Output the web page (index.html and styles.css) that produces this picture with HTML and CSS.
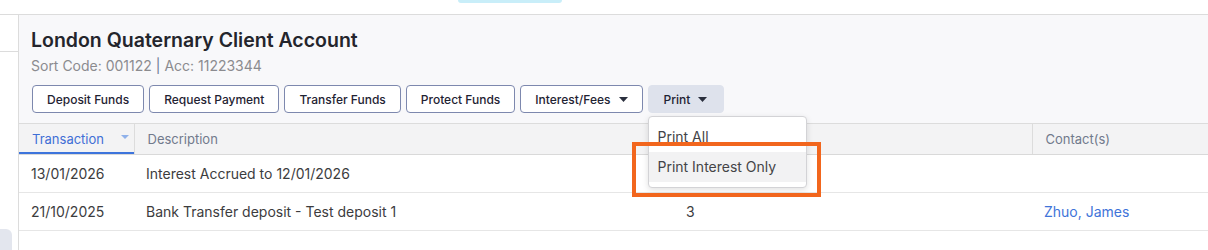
FILE: index.html
```html
<!DOCTYPE html>
<html lang="en">
<head>
<meta charset="utf-8">
<title>London Quaternary Client Account</title>
<link rel="stylesheet" href="styles.css">
</head>
<body>
<div class="topbar"><div class="pill"></div></div>
<div class="layout">
  <aside class="sidebar">
    <div class="side-top"></div>
    <div class="side-chip"></div>
  </aside>
  <main class="main">
    <section class="account-head">
      <h1 class="title">London Quaternary Client Account</h1>
      <p class="meta">Sort Code: 001122 <span class="sep">|</span> Acc: 11223344</p>
      <div class="actions">
        <button class="btn">Deposit Funds</button>
        <button class="btn">Request Payment</button>
        <button class="btn">Transfer Funds</button>
        <button class="btn">Protect Funds</button>
        <button class="btn">Interest/Fees <svg class="caret" width="9" height="5" viewBox="0 0 9 5"><path d="M0 0h9L4.5 5z" fill="currentColor"/></svg></button>
        <div class="print-wrap">
          <button class="btn btn-print">Print <svg class="caret" width="9" height="5" viewBox="0 0 9 5"><path d="M0 0h9L4.5 5z" fill="currentColor"/></svg></button>
          <div class="menu">
            <div class="menu-item">Print All</div>
            <div class="menu-item active">Print Interest Only</div>
            <div class="callout"></div>
          </div>
        </div>
      </div>
    </section>
    <table class="grid">
      <colgroup>
        <col class="c-tx"><col class="c-desc"><col class="c-amt"><col class="c-contact">
      </colgroup>
      <thead>
        <tr>
          <th class="sorted"><span>Transaction</span><svg class="sort" width="8" height="4" viewBox="0 0 8 4"><path d="M0 0h8L4 4z" fill="currentColor"/></svg></th>
          <th>Description</th>
          <th></th>
          <th class="last">Contact(s)</th>
        </tr>
      </thead>
      <tbody>
        <tr>
          <td>13/01/2026</td>
          <td>Interest Accrued to 12/01/2026</td>
          <td></td>
          <td></td>
        </tr>
        <tr>
          <td>21/10/2025</td>
          <td>Bank Transfer deposit - Test deposit 1</td>
          <td>3</td>
          <td><a class="link" href="#">Zhuo, James</a></td>
        </tr>
      </tbody>
    </table>
  </main>
</div>
</body>
</html>
```
FILE: styles.css
```css
* { box-sizing: border-box; }
html, body { margin: 0; padding: 0; }
body {
  font-family: Inter, "Noto Sans", sans-serif;
  background: #ffffff;
  color: #3d3d3d;
  overflow: hidden;
  height: 250px;
}
.topbar {
  height: 15px;
  border-bottom: 1px solid #dcdcdc;
  display: flex;
}
.pill {
  margin-left: 458px;
  width: 104px;
  height: 3px;
  background: #c9eef9;
  border-radius: 0 0 6px 6px;
}
.layout {
  display: flex;
  height: 235px;
}
.sidebar {
  width: 19px;
  flex: 0 0 19px;
  border-right: 1px solid #dcdcdc;
  display: flex;
  flex-direction: column;
}
.side-top {
  height: 37px;
  border-bottom: 1px solid #dcdcdc;
}
.side-chip {
  margin-top: auto;
  width: 12px;
  height: 21px;
  background: #e3e6ee;
  border-radius: 0 6px 0 0;
}
.main {
  flex: 1;
  min-width: 0;
}
.account-head {
  background: #f8f8fa;
  border-bottom: 1px solid #dcdcdc;
  padding: 13px 12px 10px 12px;
}
.title {
  margin: 0;
  font-size: 19.5px;
  line-height: 24px;
  font-weight: 600;
  color: #24252c;
}
.meta {
  margin: 4px 0 0;
  font-size: 14px;
  line-height: 19px;
  color: #8b8b8f;
}
.sep { color: #6d7896; }
.actions {
  margin-top: 10px;
  display: flex;
  gap: 5px;
  padding-left: 1px;
}
.btn {
  height: 28px;
  padding: 0 14px;
  border: 1px solid #7d88ae;
  border-radius: 4px;
  background: #ffffff;
  font-family: Inter, "Noto Sans", sans-serif;
  font-size: 12px;
  font-weight: 500;
  color: #1f2333;
  display: inline-flex;
  align-items: center;
  gap: 8px;
}
.caret { color: #2a2f3d; }
.print-wrap { position: relative; }
.btn-print {
  background: #dee2ec;
  border-color: #dee2ec;
  padding: 0 16px 0 15px;
}
.menu {
  position: absolute;
  top: 31px;
  left: 0;
  width: 159px;
  background: #ffffff;
  border: 1px solid #d3d3d6;
  border-radius: 4px;
  box-shadow: 0 2px 6px rgba(0,0,0,0.12);
  padding: 5px 0 5px;
  z-index: 10;
}
.menu-item {
  height: 30px;
  line-height: 30px;
  padding-left: 9px;
  font-size: 14px;
  color: #444447;
}
.menu-item.active { background: #f2f2f3; }
.callout {
  position: absolute;
  left: -17px;
  top: 25px;
  width: 189px;
  height: 55px;
  border: 4px solid #f2661d;
  pointer-events: none;
}
.grid {
  width: 100%;
  border-collapse: collapse;
  table-layout: fixed;
  font-size: 14px;
}
.c-tx { width: 115px; }
.c-desc { width: 540px; }
.c-amt { width: 358px; }
.c-contact { width: auto; }
.grid th {
  height: 30px;
  background: #f3f3f4;
  border-bottom: 1px solid #d9d9d9;
  border-right: 1px solid #dcdcdc;
  text-align: left;
  font-weight: 400;
  font-size: 13px;
  color: #717a8c;
  padding: 0 12px 0 13px;
}
.grid th.last { border-right: none; }
.grid th.sorted {
  color: #3f6fd6;
  box-shadow: inset 0 -2px 0 #3d74dc;
  padding-right: 5px;
}
.grid th.sorted span { vertical-align: middle; }
.sort {
  float: right;
  margin-top: 5px;
  color: #8fb1ea;
}
.grid td {
  height: 38px;
  border-bottom: 1px solid #e6e6e6;
  padding: 0 12px 0 12px;
  color: #3c3c3e;
  white-space: nowrap;
}
.link {
  color: #3f74d9;
  text-decoration: none;
}
```
